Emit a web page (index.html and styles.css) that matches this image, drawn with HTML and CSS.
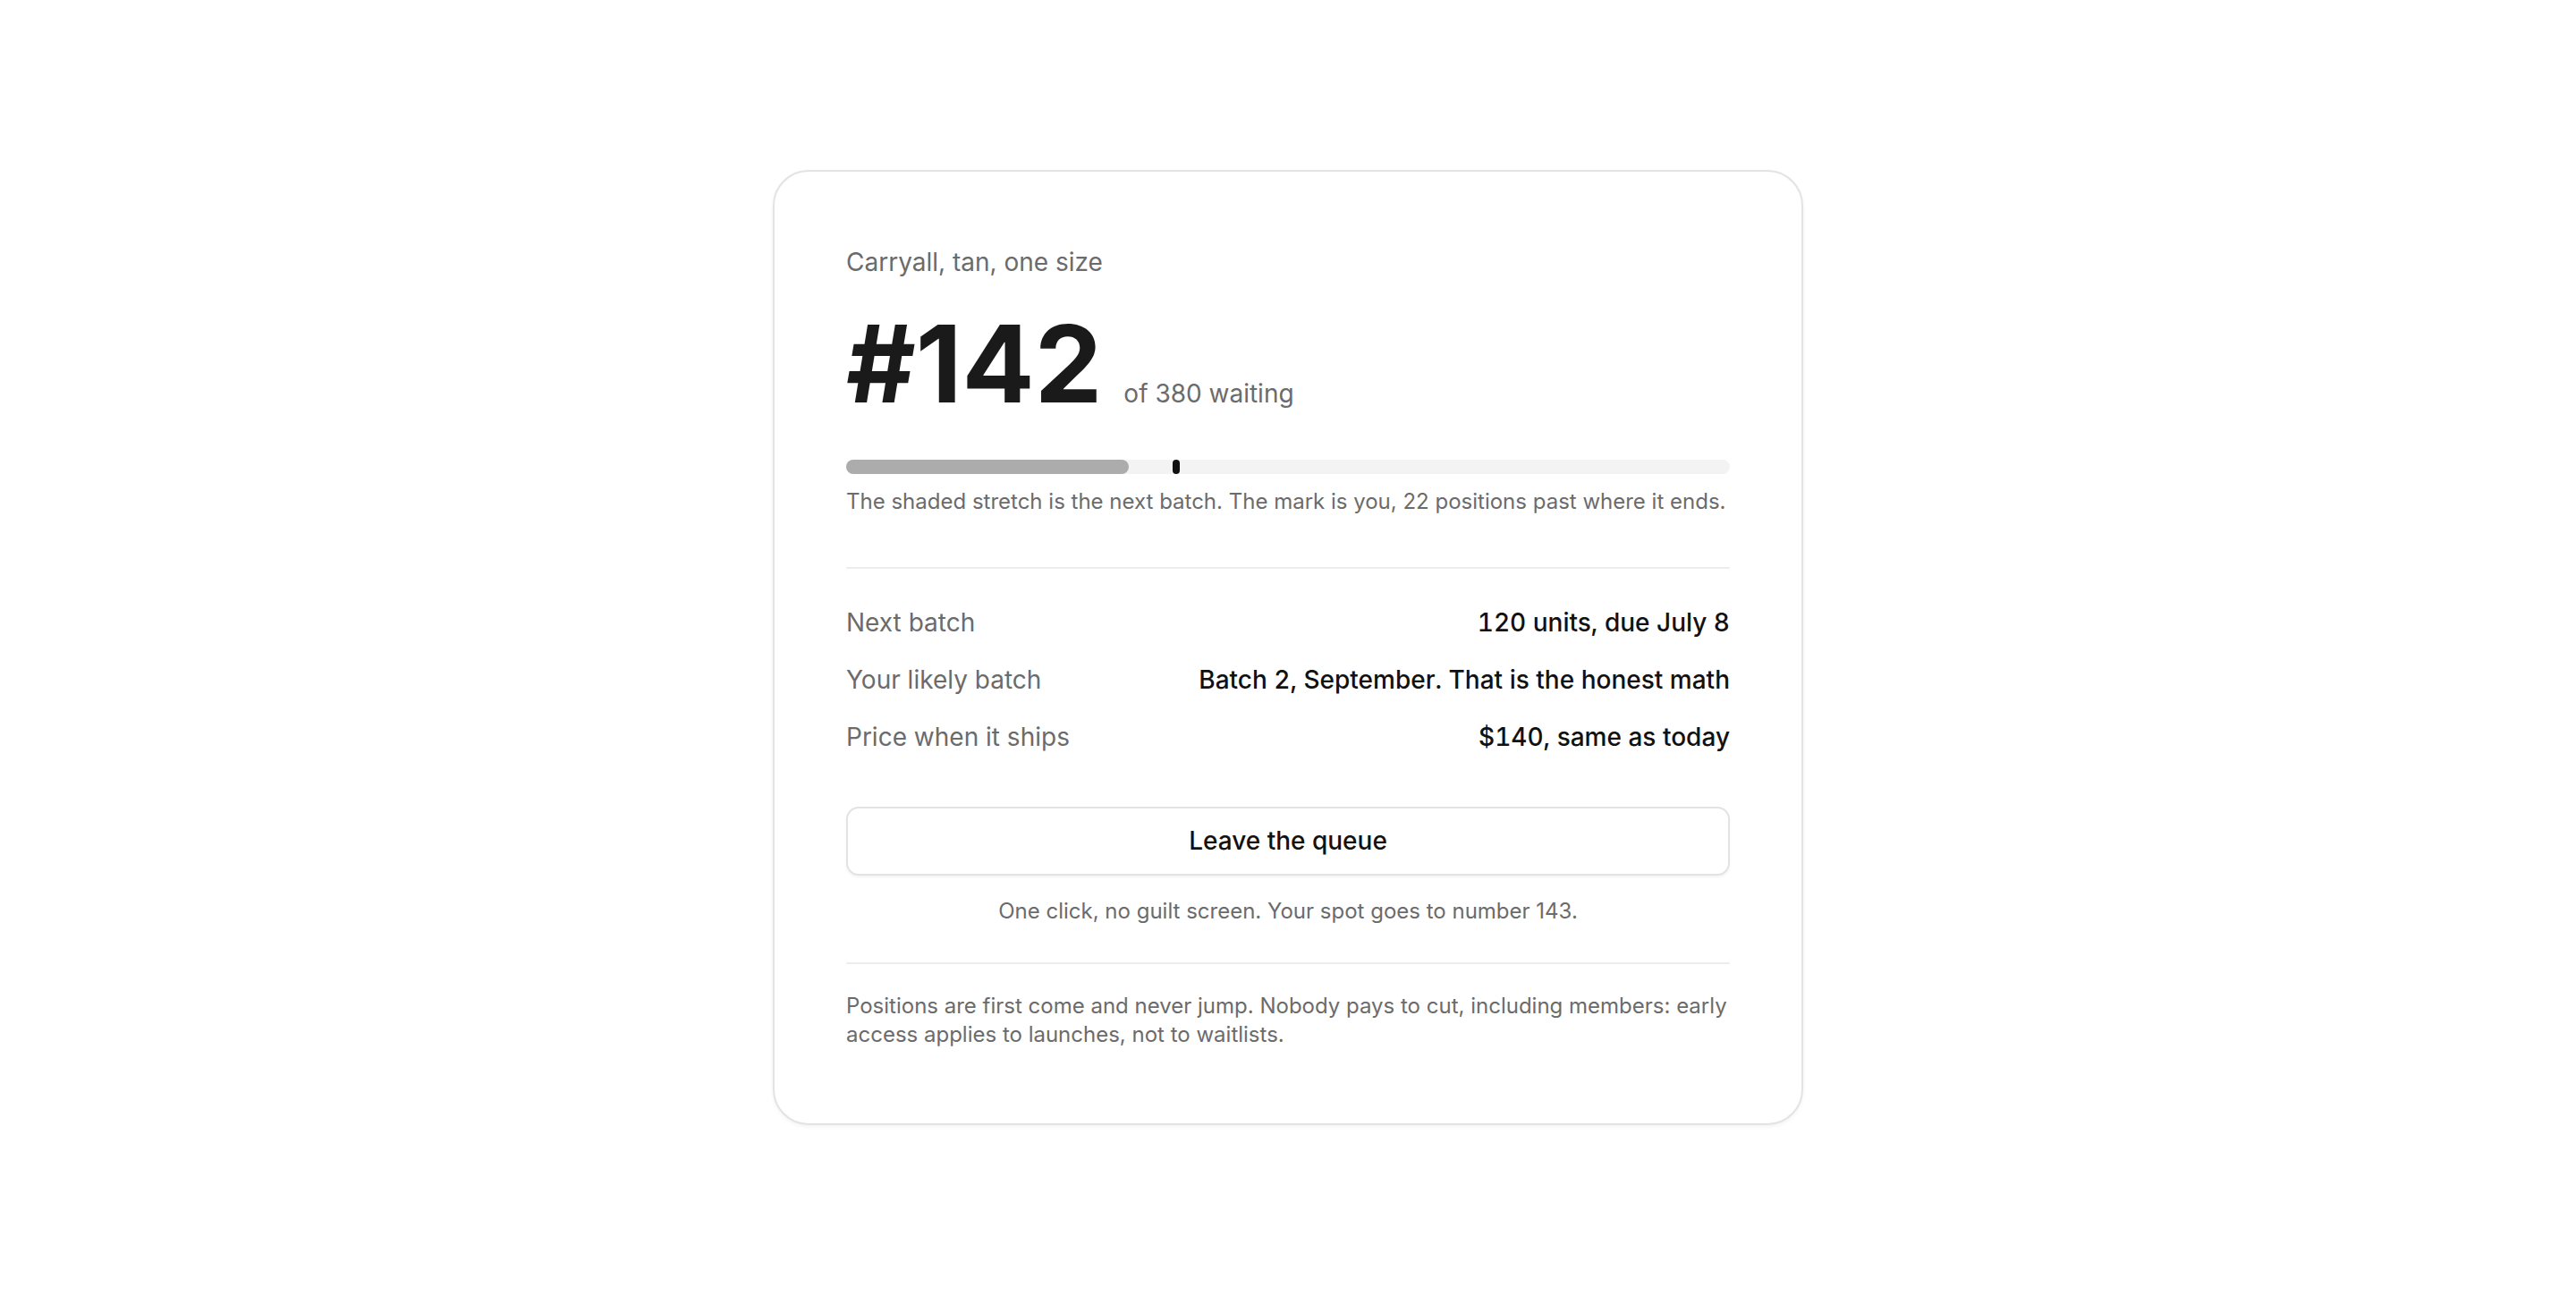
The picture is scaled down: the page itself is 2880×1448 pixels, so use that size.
FILE: index.html
```html
<!DOCTYPE html>
<html lang="en">
<head>
    <meta charset="UTF-8">
    <meta name="viewport" content="width=device-width, initial-scale=1.0">
    <title>Your place in line</title>
    <link rel="stylesheet" href="styles.css">
</head>
<body>
    <main class="queue-card">
        <p class="product">Carryall, tan, one size</p>

        <div class="position">
            <span class="position-number">#142</span>
            <span class="position-total">of 380 waiting</span>
        </div>

        <div class="track">
            <div class="track-batch" style="width: 32%;"></div>
            <div class="track-mark" style="left: 37.37%;"></div>
        </div>
        <p class="track-note">The shaded stretch is the next batch. The mark is you, 22 positions past where it ends.</p>

        <hr class="divider divider-top">

        <dl class="facts">
            <div class="fact">
                <dt>Next batch</dt>
                <dd>120 units, due July 8</dd>
            </div>
            <div class="fact">
                <dt>Your likely batch</dt>
                <dd>Batch 2, September. That is the honest math</dd>
            </div>
            <div class="fact">
                <dt>Price when it ships</dt>
                <dd>$140, same as today</dd>
            </div>
        </dl>

        <button class="leave-btn" type="button">Leave the queue</button>
        <p class="leave-note">One click, no guilt screen. Your spot goes to number 143.</p>

        <hr class="divider divider-bottom">

        <p class="fine-print">Positions are first come and never jump. Nobody pays to cut, including members: early access applies to launches, not to waitlists.</p>
    </main>
</body>
</html>
```

FILE: styles.css
```css
* {
    margin: 0;
    padding: 0;
    box-sizing: border-box;
}

body {
    font-family: 'Inter', 'Noto Sans', sans-serif;
    background: #ffffff;
    color: #1a1a1a;
    min-height: 100vh;
    display: flex;
    align-items: center;
    justify-content: center;
}

.queue-card {
    width: 1152px;
    padding: 83px 80px;
    border: 2px solid #e3e3e3;
    border-radius: 40px;
    background: #fff;
    box-shadow: 0 2px 4px rgba(0,0,0,0.05);
}

.product {
    font-size: 28px;
    line-height: 1.35;
    color: #6b6b6b;
}

.position {
    display: flex;
    align-items: baseline;
    gap: 24px;
    margin-top: 34px;
}

.position-number {
    font-size: 120px;
    font-weight: 700;
    line-height: 1;
    color: #1a1a1a;
}

.position-total {
    font-size: 28px;
    color: #6b6b6b;
}

.track {
    position: relative;
    height: 16px;
    margin-top: 47px;
    border-radius: 8px;
    background: #f3f3f3;
}

.track-batch {
    height: 100%;
    border-radius: 8px;
    background: #acacac;
}

.track-mark {
    position: absolute;
    top: 0;
    width: 8px;
    height: 16px;
    margin-left: -4px;
    border-radius: 4px;
    background: #111;
}

.track-note {
    margin-top: 14px;
    font-size: 24px;
    line-height: 1.4;
    color: #6b6b6b;
}

.divider {
    border: 0;
    height: 2px;
    background: #ededed;
}

.divider-top {
    margin: 56px 0 39px;
}

.divider-bottom {
    margin: 40px 0 31px;
}

.facts {
    display: flex;
    flex-direction: column;
    gap: 22px;
}

.fact {
    display: flex;
    justify-content: space-between;
    align-items: baseline;
    font-size: 28px;
    line-height: 1.5;
}

.fact dt {
    color: #6b6b6b;
}

.fact dd {
    font-weight: 500;
    font-variant-numeric: tabular-nums;
    color: #111;
}

.leave-btn {
    display: block;
    width: 100%;
    margin-top: 57px;
    padding: 17px 0;
    font-family: inherit;
    font-size: 28px;
    font-weight: 500;
    line-height: 1.4;
    color: #111;
    background: #fff;
    border: 2px solid #e3e3e3;
    border-radius: 14px;
    box-shadow: 0 2px 3px rgba(0,0,0,0.05);
    cursor: pointer;
}

.leave-note {
    margin-top: 23px;
    text-align: center;
    font-size: 24px;
    line-height: 1.4;
    color: #6b6b6b;
}

.fine-print {
    font-size: 24px;
    line-height: 32px;
    color: #6b6b6b;
}
```
